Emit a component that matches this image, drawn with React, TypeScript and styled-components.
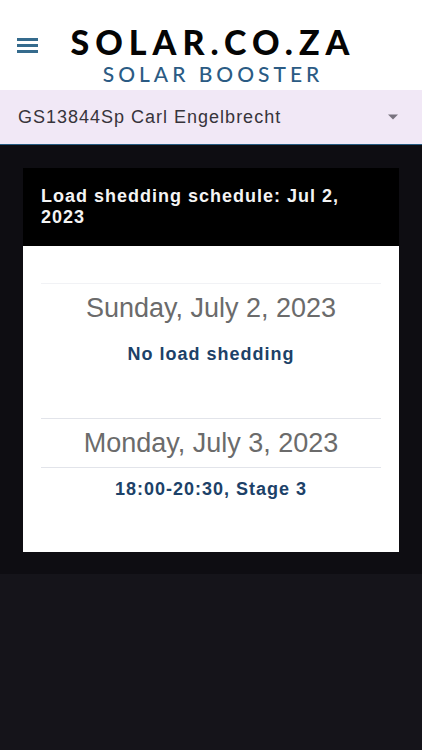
import React from "react";
import styled, { createGlobalStyle } from "styled-components";

const GlobalStyle = createGlobalStyle`
  * { box-sizing: border-box; }
  body {
    margin: 0;
    background: #15141a;
    font-family: "Liberation Sans", Arial, sans-serif;
  }
`;

const Header = styled.header`
  display: grid;
  grid-template-columns: 24px 1fr 20px;
  align-items: center;
  height: 90px;
  padding: 0 16px;
  background: #fff;
`;

const MenuButton = styled.button`
  display: flex;
  width: 24px;
  height: 24px;
  padding: 0;
  border: 0;
  background: none;
`;

const Brand = styled.div`
  display: flex;
  flex-direction: column;
  align-items: center;
  padding-top: 22px;
  white-space: nowrap;
  font-family: Lato, sans-serif;
`;

const BrandName = styled.div`
  color: #050505;
  font-size: 34px;
  font-weight: 900;
  line-height: 36px;
  letter-spacing: 6px;
`;

const BrandProduct = styled.div`
  color: #2b5b84;
  font-size: 21px;
  font-weight: 500;
  line-height: 28px;
  letter-spacing: 4px;
`;

const SiteField = styled.label`
  display: grid;
  grid-template-columns: 1fr 10px;
  align-items: center;
  height: 55px;
  padding: 0 24px 0 18px;
  background: #f1e8f6;
  border-bottom: 1px solid #245a80;
`;

const SiteSelect = styled.select`
  grid-area: 1 / 1 / 2 / 3;
  width: 100%;
  height: 52px;
  padding: 0;
  appearance: none;
  border: 0;
  background: transparent;
  color: #37343b;
  font-family: inherit;
  font-size: 18px;
  letter-spacing: 1px;
`;

const Arrow = styled.svg`
  grid-area: 1 / 2;
  pointer-events: none;
`;

const Main = styled.main`
  padding: 23px 23px 22px;
  background: #0e0d12;
`;

const Card = styled.section`
  background: #fff;
`;

const CardTitle = styled.h1`
  margin: 0;
  padding: 18px;
  background: #000;
  color: #f4f4f4;
  font-size: 18px;
  line-height: 21px;
  min-height: 78px;
  letter-spacing: 1px;
`;

const Days = styled.div`
  display: flex;
  flex-direction: column;
  gap: 43px;
  padding: 37px 18px 42px;
`;

const Day = styled.article`
  text-align: center;
`;

const DayTitle = styled.h2<{ $ruled?: boolean }>`
  margin: 0;
  border-top: 1px solid ${(p) => (p.$ruled ? "#e2e4ea" : "#f1f2f5")};
  border-bottom: 1px solid ${(p) => (p.$ruled ? "#e2e4ea" : "transparent")};
  color: #6b6b6b;
  font-size: 27px;
  font-weight: 400;
  line-height: 48px;
`;

const Slot = styled.p`
  margin: 0;
  color: #1c4168;
  font-size: 18px;
  font-weight: 700;
  line-height: 42px;
  letter-spacing: 1px;
`;

const schedule = [
  { title: "Sunday, July 2, 2023", slot: "No load shedding", ruled: false },
  { title: "Monday, July 3, 2023", slot: "18:00-20:30, Stage 3", ruled: true },
];

export default function App() {
  return (
    <>
      <GlobalStyle />
      <Header>
        <MenuButton aria-label="Menu">
          <svg width="24" height="24" viewBox="0 0 24 24" fill="#356b8d">
            <path d="M1 5h21v3H1zM1 11h21v3H1zM1 17h21v3H1z" />
          </svg>
        </MenuButton>
        <Brand>
          <BrandName>SOLAR.CO.ZA</BrandName>
          <BrandProduct>SOLAR BOOSTER</BrandProduct>
        </Brand>
      </Header>
      <SiteField>
        <SiteSelect aria-label="Site">
          <option>GS13844Sp Carl Engelbrecht</option>
        </SiteSelect>
        <Arrow width="10" height="6" viewBox="0 0 10 6" fill="#79737f">
          <path d="M0 0.5h10L5 5.5z" />
        </Arrow>
      </SiteField>
      <Main>
        <Card>
          <CardTitle>Load shedding schedule: Jul 2, 2023</CardTitle>
          <Days>
            {schedule.map((day) => (
              <Day key={day.title}>
                <DayTitle $ruled={day.ruled}>{day.title}</DayTitle>
                <Slot>{day.slot}</Slot>
              </Day>
            ))}
          </Days>
        </Card>
      </Main>
    </>
  );
}
